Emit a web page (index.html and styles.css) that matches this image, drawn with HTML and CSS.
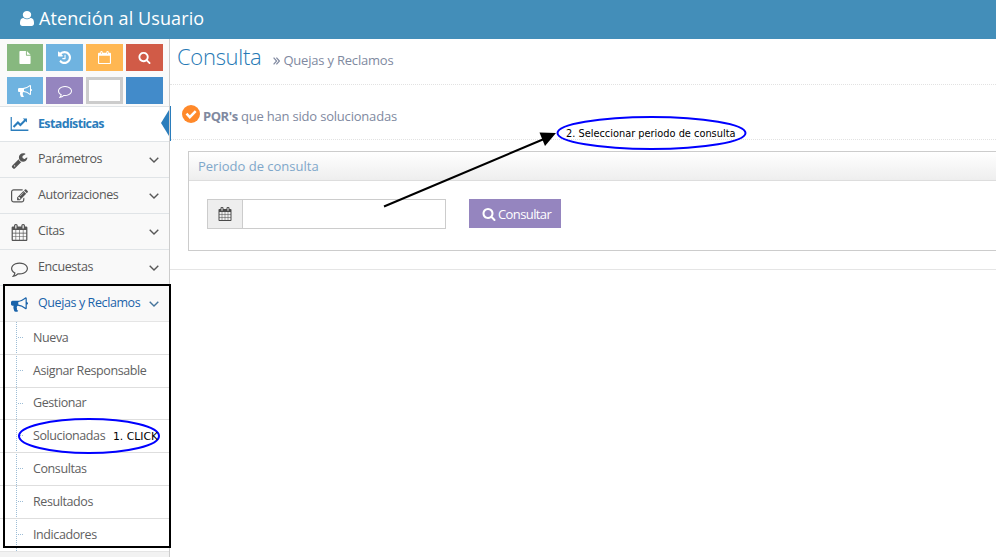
FILE: index.html
```html
<!DOCTYPE html>
<html lang="es">
<head>
<meta charset="utf-8">
<title>Atención al Usuario</title>
<link rel="stylesheet" href="styles.css">
</head>
<body>
<svg class="defs" aria-hidden="true">
  <symbol id="user" viewBox="256 128 1280 1536" preserveAspectRatio="none"><path d="M1536 1399q0 109-62.500 187t-150.500 78h-854q-88 0-150.500-78t-62.500-187q0-85 8.500-160.500t31.500-152 58.500-131 94-89 134.500-34.500q131 128 313 128t313-128q76 0 134.500 34.500t94 89 58.500 131 31.500 152 8.500 160.500zm-256-887q0 159-112.500 271.500t-271.500 112.500-271.500-112.500-112.500-271.500 112.500-271.500 271.500-112.500 271.500 112.500 112.500 271.500z"/></symbol>
  <symbol id="search" viewBox="0 0 1792 1792"><path d="M1216 832q0-185-131.500-316.500t-316.500-131.500-316.500 131.500-131.500 316.500 131.500 316.500 316.500 131.500 316.500-131.500 131.500-316.500zm512 832q0 52-38 90t-90 38q-54 0-90-38l-343-342q-179 124-399 124-143 0-273.500-55.500t-225-150-150-225-55.500-273.500 55.500-273.500 150-225 225-150 273.500-55.500 273.500 55.500 225 150 150 225 55.500 273.500q0 220-124 399l343 343q37 37 37 90z"/></symbol>
  <symbol id="calendar" viewBox="0 0 1792 1792"><path d="M192 1664h288v-288h-288v288zm352 0h320v-288h-320v288zm-352-352h288v-320h-288v320zm352 0h320v-320h-320v320zm-352-384h288v-288h-288v288zm736 736h320v-288h-320v288zm-384-736h320v-288h-320v288zm768 736h288v-288h-288v288zm-384-352h320v-320h-320v320zm-352-864v-288q0-13-9.500-22.500t-22.500-9.500h-64q-13 0-22.500 9.500t-9.500 22.500v288q0 13 9.500 22.500t22.500 9.500h64q13 0 22.500-9.500t9.500-22.500zm736 864h288v-320h-288v320zm-384-384h320v-288h-320v288zm384 0h288v-288h-288v288zm32-480v-288q0-13-9.500-22.500t-22.500-9.500h-64q-13 0-22.500 9.500t-9.500 22.500v288q0 13 9.500 22.500t22.500 9.500h64q13 0 22.500-9.500t9.500-22.500zm384-64v1280q0 52-38 90t-90 38h-1408q-52 0-90-38t-38-90v-1280q0-52 38-90t90-38h128v-96q0-66 47-113t113-47h64q66 0 113 47t47 113v96h384v-96q0-66 47-113t113-47h64q66 0 113 47t47 113v96h128q52 0 90 38t38 90z"/></symbol>
  <symbol id="bullhorn" viewBox="0 0 1792 1792"><path d="M1664 640q53 0 90.500 37.500t37.500 90.500-37.500 90.500-90.500 37.500v384q0 52-38 90t-90 38q-417-347-812-380-58 19-91 66t-31 100.500 40 92.500q-20 33-23 65.500t6 58 33.500 55 48 50 61.500 50.500q-29 58-111.500 83t-168.500 11.500-132-55.500q-7-23-29.500-87.500t-32-94.500-23-89-15-101 3.500-98.500 22-110.500h-122q-66 0-113-47t-47-113v-192q0-66 47-113t113-47h480q435 0 896-384 52 0 90 38t38 90v384zm-128 604v-954q-394 302-768 343v270q377 42 768 341z"/></symbol>
  <symbol id="wrench" viewBox="0 0 1792 1792"><path d="M448 1472q0-26-19-45t-45-19-45 19-19 45 19 45 45 19 45-19 19-45zm644-420l-682 682q-37 37-90 37-52 0-91-37l-106-108q-38-36-38-90 0-53 38-91l681-681q39 98 114.500 173.500t173.500 114.500zm634-435q0 39-23 106-47 134-164.500 217.500t-258.500 83.500q-185 0-316.500-131.500t-131.500-316.500 131.500-316.500 316.500-131.500q58 0 121.500 16.500t107.500 46.500q16 11 16 28t-16 28l-293 169v224l193 107q5-3 79-48.500t135.500-81 70.500-35.500q15 0 23.500 10t8.500 25z"/></symbol>
  <symbol id="history" viewBox="128 128 1536 1536"><path d="M1664 896q0 156-61 298t-164 245-245 164-298 61q-172 0-327-72.500t-264-204.500q-7-10-6.500-22.500t8.500-20.500l137-138q10-9 25-9 16 2 23 12 73 95 179 147t225 52q104 0 198.500-40.500t163.500-109.500 109.500-163.500 40.500-198.500-40.500-198.500-109.500-163.500-163.500-109.500-198.500-40.500q-98 0-188 35.500t-160 101.500l137 138q31 30 14 69-17 40-59 40h-448q-26 0-45-19t-19-45v-448q0-42 40-59 39-17 69 14l130 129q107-101 244.500-156.500t284.500-55.500q156 0 298 61t245 164 164 245 61 298zm-640-288v448q0 14-9 23t-23 9h-320q-14 0-23-9t-9-23v-64q0-14 9-23t23-9h224v-352q0-14 9-23t23-9h64q14 0 23 9t9 23z"/></symbol>
  <symbol id="comment" viewBox="0 0 1792 1792"><path d="M896 384q-204 0-381.500 69.500t-282 187.500-104.500 255q0 112 71.500 213.500t201.500 175.500l87 50-27 96q-24 91-70 172 152-63 275-171l43-38 57 6q69 8 130 8 204 0 381.500-69.500t282-187.500 104.500-255-104.500-255-282-187.500-381.500-69.500zm896 512q0 174-120 321.500t-326 233-450 85.500q-70 0-145-8-198 175-460 242-49 14-114 22h-5q-15 0-27-10.500t-16-27.500v-1q-3-4-.5-12t2-10 4.500-9.500l6-9 7-8.500 8-9q7-8 31-34.500t34.500-38 31-39.500 32.500-51 27-59 26-76q-157-89-247.500-220t-90.500-281q0-174 120-321.500t326-233 450-85.500 450 85.500 326 233 120 321.500z"/></symbol>
  <symbol id="edit" viewBox="0 0 1792 1792"><path d="M888 1184l116-116-152-152-116 116v56h96v96h56zm440-720q-16-16-33 1l-350 350q-17 17-1 33t33-1l350-350q17-17 1-33zm80 594v190q0 119-84.500 203.500t-203.500 84.500h-832q-119 0-203.500-84.500t-84.500-203.500v-832q0-119 84.500-203.500t203.500-84.500h832q63 0 117 25 15 7 18 23 3 17-9 29l-49 49q-14 14-32 8-23-6-45-6h-832q-66 0-113 47t-47 113v832q0 66 47 113t113 47h832q66 0 113-47t47-113v-126q0-13 9-22l64-64q15-15 35-7t20 29zm-96-738l288 288-672 672h-288v-288zm444 132l-92 92-288-288 92-92q28-28 68-28t68 28l152 152q28 28 28 68t-28 68z"/></symbol>
  <symbol id="file" viewBox="0 0 12 14"><path d="M.8 0H7v4.300q0 .7.700.7H12v8.200q0 .8-.8.800H.8Q0 14 0 13.200V.8Q0 0 .8 0zM8 0l4 4H8z"/></symbol>
  <symbol id="calendar-empty" viewBox="0 0 14 14"><path fill-rule="evenodd" d="M1 2h1.500V1.200Q2.500 0 3.700 0T5 1.200V2h4v-.8Q9 0 10.300 0t1.200 1.200V2H13q1 0 1 1v10q0 1-1 1H1q-1 0-1-1V3q0-1 1-1zm.2 3v7.800h11.600V5zM3.500 1v2.200h.6V1zm6.400 0v2.200h.6V1z"/></symbol>
  <symbol id="chart" viewBox="0 0 19 15"><path d="M0 0h1.300v13.500H19V15H0zM13 1.500h4.500V6L16 4.600l-5.500 5.600-2.700-2.700-3.900 4-1.600-1.700L7.800 4.300l2.700 2.700 4-4z"/></symbol>
  <symbol id="chevron" viewBox="0 0 10 6"><path d="M.7.7 5 5 9.300.7" fill="none" stroke="currentColor" stroke-width="1.400"/></symbol>
  <symbol id="check" viewBox="0 0 18 18"><circle cx="9" cy="9" r="9"/><path d="m4.500 8.700 3.300 3.400 5.900-5.900" fill="none" stroke="#fff" stroke-width="2.500"/></symbol>
  <symbol id="angles" viewBox="0 0 7 8"><path d="m.6.600 3 3.400-3 3.400M3.400.600l3 3.400-3 3.400" fill="none" stroke="currentColor" stroke-width="1.200"/></symbol>
</svg>

<header class="navbar"><svg class="brand-icon"><use href="#user"/></svg><span class="brand">Atención al Usuario</span></header>

<div class="layout">
  <nav class="sidebar">
    <div class="shortcuts">
      <a class="tile green"><svg class="i-file"><use href="#file"/></svg></a>
      <a class="tile sky"><svg class="i-small"><use href="#history"/></svg></a>
      <a class="tile amber"><svg class="i-small"><use href="#calendar-empty"/></svg></a>
      <a class="tile red"><svg class="i-small"><use href="#search"/></svg></a>
      <a class="tile sky"><svg class="i-wide"><use href="#bullhorn"/></svg></a>
      <a class="tile purple"><svg class="i-wide"><use href="#comment"/></svg></a>
      <a class="tile blank"></a>
      <a class="tile blue"></a>
    </div>
    <a class="item active"><svg class="icon chart"><use href="#chart"/></svg><span class="t-est">Estadísticas</span></a>
    <a class="item"><svg class="icon"><use href="#wrench"/></svg><span>Parámetros</span><svg class="chev"><use href="#chevron"/></svg></a>
    <a class="item"><svg class="icon"><use href="#edit"/></svg><span>Autorizaciones</span><svg class="chev"><use href="#chevron"/></svg></a>
    <a class="item"><svg class="icon"><use href="#calendar"/></svg><span>Citas</span><svg class="chev"><use href="#chevron"/></svg></a>
    <a class="item"><svg class="icon"><use href="#comment"/></svg><span>Encuestas</span><svg class="chev"><use href="#chevron"/></svg></a>
    <a class="item open"><svg class="icon"><use href="#bullhorn"/></svg><span>Quejas y Reclamos</span><svg class="chev"><use href="#chevron"/></svg></a>
    <ul class="submenu">
      <li>Nueva</li>
      <li>Asignar Responsable</li>
      <li>Gestionar</li>
      <li>Solucionadas</li>
      <li>Consultas</li>
      <li>Resultados</li>
      <li>Indicadores</li>
    </ul>
  </nav>

  <main class="content">
    <div class="page-header"><h1>Consulta</h1><svg class="angles"><use href="#angles"/></svg><small>Quejas y Reclamos</small></div>
    <div class="lead"><svg class="check"><use href="#check"/></svg><p><b>PQR's</b> <span>que han sido solucionadas</span></p></div>
    <section class="panel">
      <h2>Periodo de consulta</h2>
      <div class="form">
        <div class="field"><span class="addon"><svg><use href="#calendar"/></svg></span><input type="text" aria-label="Periodo"></div>
        <button class="query"><svg><use href="#search"/></svg><span>Consultar</span></button>
      </div>
    </section>
    <hr>
  </main>
</div>

<svg class="notes" viewBox="0 0 996 557">
  <rect x="4" y="285" width="166" height="262" fill="none" stroke="#000" stroke-width="2"/>
  <ellipse cx="89" cy="436" rx="70" ry="17" fill="none" stroke="#00f" stroke-width="2"/>
  <text x="113" y="440" textLength="45" lengthAdjust="spacingAndGlyphs">1. CLICK</text>
  <path d="M384 206.500 544 139" stroke="#000" stroke-width="2"/>
  <path d="m539.500 132.500 16.500.5-11 13z"/>
  <ellipse cx="651.500" cy="133" rx="94" ry="16" fill="none" stroke="#00f" stroke-width="2"/>
  <text x="566" y="137" textLength="169.500" lengthAdjust="spacingAndGlyphs">2. Seleccionar periodo de consulta</text>
</svg>
</body>
</html>
```
FILE: styles.css
```css
* { box-sizing: border-box; }
body { margin: 0; height: 557px; overflow: hidden; background: #fff; position: relative; font: 13px/20px "Open Sans", sans-serif; color: #585858; }
svg { fill: currentColor; display: block; flex: none; }
.defs { position: absolute; width: 0; height: 0; }

.navbar { height: 39px; background: #438eb9; color: #fff; display: flex; align-items: center; padding: 0 0 2px 20px; }
.brand-icon { width: 14px; height: 15px; margin-right: 4px; }
.brand { font-size: 18px; line-height: 24px; letter-spacing: .1px; margin: -2px 0 0 1px; }

.layout { display: flex; height: 518px; }
.sidebar { width: 170px; border-right: 1px solid #ccc; background: #f2f2f2; flex: none; }
.shortcuts { height: 67px; background: #fafafa; padding: 5px 6px 0 7px; display: grid; grid-template-columns: 36px repeat(3, 37px); grid-auto-rows: 27px; gap: 6px 3px; }
.tile { display: flex; align-items: center; justify-content: center; color: #fff; }
.green { background: #87b87f; }
.sky { background: #6fb3e0; }
.amber { background: #ffb752; }
.red { background: #d15b47; }
.purple { background: #9585bf; }
.blue { background: #428bca; }
.blank { background: #fff; border: 3px solid #ccc; }
.i-file { width: 12px; height: 13px; }
.i-small { width: 13px; height: 13px; }
.i-wide { width: 14px; height: 14px; }

.item { height: 36px; border-top: 1px solid #e0e4e7; background: #f9f9f9; display: flex; align-items: center; padding: 0 10px 0 11px; position: relative; font-size: 12.500px; }
.item span { flex: 1; white-space: nowrap; letter-spacing: -.4px; margin-top: -1px; }
.icon { width: 17px; height: 17px; margin: 2px 10px 0 0; color: #555; }
.chev { width: 10px; height: 6px; }
.active { height: 35px; background: #fff; color: #2b7dbc; font-weight: 700; }
.active .icon { width: 19px; height: 14px; color: #2b7dbc; margin: 0 9px 0 -1px; }
.item .t-est { letter-spacing: -.64px; margin-top: 0; }
.active::before { content: ""; position: absolute; right: 0; top: 3px; border: solid transparent; border-width: 13px 8px 13px 0; border-right-color: #2b7dbc; }
.active::after { content: ""; position: absolute; right: -2px; top: -1px; width: 1px; height: 35px; background: #2b7dbc; }
.open, .open .icon { color: #1963aa; }
.open .chev { color: #45749b; }

.submenu { list-style: none; margin: 0; padding: 0; height: 231px; background: #fff; border-top: 1px solid #e5e5e5; border-bottom: 1px solid #e5e5e5; display: grid; grid-template-rows: 32px 33px 32px 33px 33px 33px 33px; position: relative; }
.submenu::before { content: ""; position: absolute; left: 16px; top: 0; bottom: 0; border-left: 1px dotted #9dbdd6; }
.submenu li { display: flex; align-items: center; padding-left: 33px; font-size: 12.500px; letter-spacing: -.4px; color: #616161; position: relative; }
.submenu li + li { border-top: 1px solid #dedede; padding-bottom: 1px; }
.submenu li::before { content: ""; position: absolute; left: 18px; top: 15px; width: 5px; border-top: 1px dotted #9dbdd6; }

.content { flex: 1; min-width: 0; }
.page-header { height: 46px; border-bottom: 1px dotted #e2e2e2; display: flex; align-items: baseline; padding: 1px 0 0 7px; }
h1 { margin: 0; font-size: 22px; line-height: 32px; font-weight: 300; color: #2679b5; letter-spacing: -.3px; }
.angles { width: 7px; height: 8px; margin-left: 12px; color: #8089a0; }
small { font-size: 13px; letter-spacing: -.2px; color: #8089a0; margin-left: 3px; }
.lead { height: 55px; border-bottom: 1px dotted #e2e2e2; display: flex; align-items: center; padding: 6px 0 0 12px; color: #8089a0; }
.lead p { margin: 2px 0 0 3px; font-size: 13px; letter-spacing: -.2px; }
.lead b { letter-spacing: -.45px; }
.check { width: 18px; height: 18px; color: #ff892a; margin-top: -3px; }
.panel { margin: 11px 0 0 18px; height: 100px; border: 1px solid #ccc; border-right: 0; }
h2 { margin: 0; height: 29px; border-bottom: 1px solid #ddd; background: linear-gradient(#fff, #eee); font-size: 13px; line-height: 29px; font-weight: 400; color: #7fa7ca; padding-left: 9px; letter-spacing: 0; }
.form { display: flex; padding: 18px 0 0 18px; gap: 23px; }
.field { width: 239px; height: 30px; display: flex; border: 1px solid #ccc; }
.addon { width: 35px; background: #eee; border-right: 1px solid #ccc; display: flex; align-items: center; justify-content: center; color: #4a4a4a; }
.addon svg { width: 14px; height: 14px; }
input { flex: 1; min-width: 0; border: 0; padding: 0 6px; outline: 0; }
.query { width: 92px; height: 29px; border: 0; background: #9585bf; color: #fff; font: 13px/20px "Open Sans", sans-serif; padding: 0 0 0 13px; display: flex; align-items: center; gap: 2px; letter-spacing: -.6px; }
.query svg { width: 14px; height: 14px; }
hr { margin: 18px 0 0; border: 0; border-top: 1px solid #e5e5e5; }

.notes { position: absolute; left: 0; top: 0; width: 996px; height: 557px; pointer-events: none; fill: #000; font: 10px "DejaVu Sans", sans-serif; }
```
